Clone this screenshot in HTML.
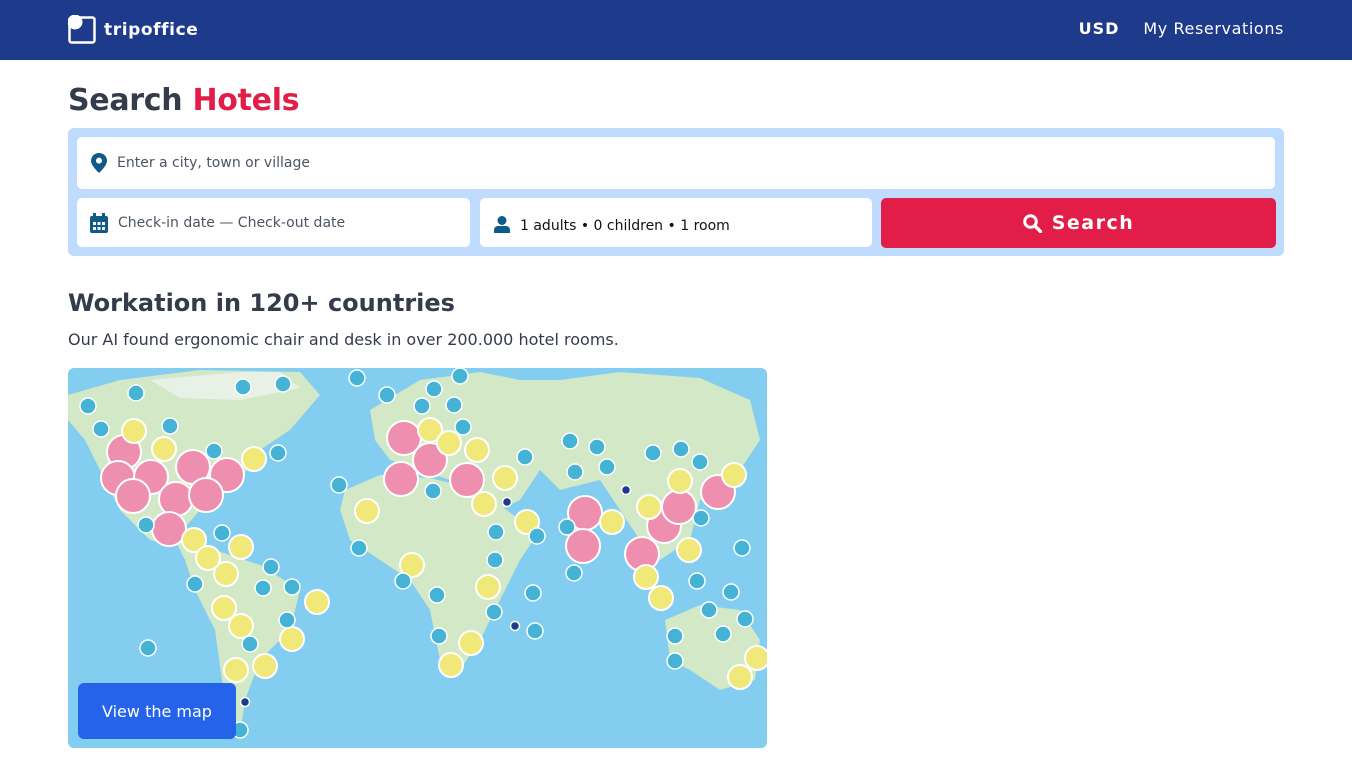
<!DOCTYPE html>
<html><head><meta charset="utf-8"><style>
*{box-sizing:border-box;margin:0;padding:0}
body{width:1352px;height:760px;overflow:hidden;background:#fff;font-family:"DejaVu Sans","Liberation Sans",sans-serif;color:#343b4a}
.nav{height:60px;background:#1e3a8a;position:relative;color:#fff}
.logo{position:absolute;left:68px;top:15px;display:flex;align-items:center}
.logo span{font-weight:bold;font-size:17px;letter-spacing:.6px;margin-left:7px}
.nr{position:absolute;right:68px;top:19px;font-size:16px;letter-spacing:.6px}
.nr b{margin-right:24px;letter-spacing:1px}
h1{position:absolute;left:68px;top:83px;font-size:30px;font-weight:bold;letter-spacing:-.3px}
h1 em{font-style:normal;color:#e11d48}
.box{position:absolute;left:68px;top:128px;width:1216px;height:128px;background:#bfdbfe;border-radius:6px}
.f{position:absolute;background:#fff;border-radius:5px;font-size:14px;color:#4b5563;display:flex;align-items:center}
.btn{position:absolute;left:813px;top:70px;width:395px;height:50px;background:#e11d48;border-radius:5px;color:#fff;font-weight:bold;font-size:19px;letter-spacing:1.5px;display:flex;align-items:center;justify-content:center}
h2{position:absolute;left:68px;top:289px;font-size:24px;font-weight:bold}
p{position:absolute;left:68px;top:330px;font-size:16px}
.map{position:absolute;left:68px;top:368px;width:699px;height:380px;border-radius:6px;overflow:hidden;background:#82cdf0}
.vb{position:absolute;left:10px;top:315px;width:158px;height:56px;background:#2563eb;border-radius:6px;color:#fff;font-size:16px;display:flex;align-items:center;justify-content:center}
</style></head><body>
<div class="nav">
<div class="logo"><svg width="29" height="29" viewBox="0 0 29 29"><rect x="1.5" y="2.5" width="25" height="25" rx="2" fill="none" stroke="#fff" stroke-width="2.5"/><circle cx="7" cy="7" r="7.5" fill="#fff"/></svg><span>tripoffice</span></div>
<div class="nr"><b>USD</b>My Reservations</div>
</div>
<h1>Search <em>Hotels</em></h1>
<div class="box">
<div class="f" style="left:9px;top:9px;width:1198px;height:52px"><svg style="margin:0 10px 0 14px" width="16" height="20" viewBox="0 0 16 20"><path d="M8 0C3.6 0 0 3.4 0 7.8 0 13 8 20 8 20s8-7 8-12.2C16 3.4 12.4 0 8 0z" fill="#0e5a8a"/><circle cx="8" cy="7.6" r="3" fill="#fff"/></svg>Enter a city, town or village</div>
<div class="f" style="left:9px;top:70px;width:393px;height:49px"><svg style="margin:0 10px 0 13px" width="18" height="20" viewBox="0 0 18 20"><rect x="0" y="3" width="18" height="17" rx="2" fill="#0e5a8a"/><rect x="3" y="0" width="3" height="5" fill="#0e5a8a"/><rect x="12" y="0" width="3" height="5" fill="#0e5a8a"/><g fill="#fff"><rect x="3" y="9" width="3" height="3"/><rect x="7.5" y="9" width="3" height="3"/><rect x="12" y="9" width="3" height="3"/><rect x="3" y="14" width="3" height="3"/><rect x="7.5" y="14" width="3" height="3"/><rect x="12" y="14" width="3" height="3"/></g></svg>Check-in date — Check-out date</div>
<div class="f" style="left:412px;top:70px;width:392px;height:49px;color:#111"><svg style="margin:4px 10px 0 14px" width="16" height="17" viewBox="0 0 16 17"><circle cx="8" cy="4.5" r="4.5" fill="#0e5a8a"/><path d="M0 17v-3c0-2.5 2-4 4-4h8c2 0 4 1.5 4 4v3z" fill="#0e5a8a"/></svg><span style="margin-top:6px">1 adults • 0 children • 1 room</span></div>
<div class="btn"><svg style="margin-right:10px" width="19" height="19" viewBox="0 0 19 19"><circle cx="7.5" cy="7.5" r="5.8" fill="none" stroke="#fff" stroke-width="3"/><path d="M12 12l5.5 5.5" stroke="#fff" stroke-width="3.4" stroke-linecap="round"/></svg>Search</div>
</div>
<h2>Workation in 120+ countries</h2>
<p>Our AI found ergonomic chair and desk in over 200.000 hotel rooms.</p>
<div class="map">
<svg width="699" height="380" viewBox="68 368 699 380">
<g fill="#d2e8c6">
<path d="M68 395L120 380 200 370 300 372 320 395 290 430 260 450 240 480 200 510 170 545 150 540 120 510 100 470 85 440 68 420z"/>
<path d="M175 540L215 550 260 565 300 590 290 630 260 660 245 700 240 735 228 730 222 680 215 630 195 590 185 560z"/>
<path d="M370 410L420 380 480 372 520 380 560 380 620 372 700 378 750 400 760 440 740 470 700 500 690 540 660 560 640 540 620 510 600 480 560 490 540 470 520 500 500 510 470 500 450 480 420 470 390 460 375 440z"/>
<path d="M345 490L380 475 430 478 480 490 520 520 540 530 520 560 500 600 480 640 460 670 440 660 430 610 410 580 380 560 350 540 340 510z"/>
<path d="M665 620L700 605 740 610 760 640 755 680 720 690 690 670 670 660z"/>
<path d="M150 380L240 372 280 372 300 388 240 400 180 398z" fill="#e8f1e6"/>
</g>
<g stroke="#fff" stroke-width="2" fill="#ef8fb0">
<circle cx="124" cy="452" r="17"/><circle cx="118" cy="478" r="17"/><circle cx="151" cy="477" r="17"/><circle cx="193" cy="467" r="17"/><circle cx="227" cy="475" r="17"/><circle cx="133" cy="496" r="17"/><circle cx="176" cy="499" r="17"/><circle cx="206" cy="495" r="17"/><circle cx="169" cy="529" r="17"/><circle cx="404" cy="438" r="17"/><circle cx="430" cy="460" r="17"/><circle cx="401" cy="479" r="17"/><circle cx="467" cy="480" r="17"/><circle cx="585" cy="513" r="17"/><circle cx="583" cy="546" r="17"/><circle cx="642" cy="554" r="17"/><circle cx="664" cy="526" r="17"/><circle cx="679" cy="507" r="17"/><circle cx="718" cy="492" r="17"/>
</g>
<g stroke="#fff" stroke-width="2" fill="#f0e878">
<circle cx="134" cy="431" r="12"/><circle cx="164" cy="449" r="12"/><circle cx="254" cy="459" r="12"/><circle cx="194" cy="540" r="12"/><circle cx="241" cy="547" r="12"/><circle cx="208" cy="558" r="12"/><circle cx="226" cy="574" r="12"/><circle cx="224" cy="608" r="12"/><circle cx="241" cy="626" r="12"/><circle cx="317" cy="602" r="12"/><circle cx="292" cy="639" r="12"/><circle cx="236" cy="670" r="12"/><circle cx="265" cy="666" r="12"/><circle cx="367" cy="511" r="12"/><circle cx="412" cy="565" r="12"/><circle cx="430" cy="430" r="12"/><circle cx="449" cy="443" r="12"/><circle cx="477" cy="450" r="12"/><circle cx="505" cy="478" r="12"/><circle cx="484" cy="504" r="12"/><circle cx="527" cy="522" r="12"/><circle cx="612" cy="522" r="12"/><circle cx="649" cy="507" r="12"/><circle cx="680" cy="481" r="12"/><circle cx="734" cy="475" r="12"/><circle cx="689" cy="550" r="12"/><circle cx="646" cy="577" r="12"/><circle cx="661" cy="598" r="12"/><circle cx="471" cy="643" r="12"/><circle cx="451" cy="665" r="12"/><circle cx="488" cy="587" r="12"/><circle cx="757" cy="658" r="12"/><circle cx="740" cy="677" r="12"/>
</g>
<g stroke="#fff" stroke-width="1.5" fill="#45b3d6">
<circle cx="88" cy="406" r="8"/><circle cx="101" cy="429" r="8"/><circle cx="136" cy="393" r="8"/><circle cx="170" cy="426" r="8"/><circle cx="214" cy="451" r="8"/><circle cx="278" cy="453" r="8"/><circle cx="146" cy="525" r="8"/><circle cx="222" cy="533" r="8"/><circle cx="271" cy="567" r="8"/><circle cx="263" cy="588" r="8"/><circle cx="292" cy="587" r="8"/><circle cx="195" cy="584" r="8"/><circle cx="250" cy="644" r="8"/><circle cx="287" cy="620" r="8"/><circle cx="148" cy="648" r="8"/><circle cx="243" cy="387" r="8"/><circle cx="283" cy="384" r="8"/><circle cx="357" cy="378" r="8"/><circle cx="387" cy="395" r="8"/><circle cx="434" cy="389" r="8"/><circle cx="422" cy="406" r="8"/><circle cx="460" cy="376" r="8"/><circle cx="454" cy="405" r="8"/><circle cx="463" cy="427" r="8"/><circle cx="339" cy="485" r="8"/><circle cx="359" cy="548" r="8"/><circle cx="403" cy="581" r="8"/><circle cx="437" cy="595" r="8"/><circle cx="439" cy="636" r="8"/><circle cx="533" cy="593" r="8"/><circle cx="535" cy="631" r="8"/><circle cx="494" cy="612" r="8"/><circle cx="495" cy="560" r="8"/><circle cx="496" cy="532" r="8"/><circle cx="537" cy="536" r="8"/><circle cx="433" cy="491" r="8"/><circle cx="525" cy="457" r="8"/><circle cx="570" cy="441" r="8"/><circle cx="597" cy="447" r="8"/><circle cx="575" cy="472" r="8"/><circle cx="607" cy="467" r="8"/><circle cx="653" cy="453" r="8"/><circle cx="681" cy="449" r="8"/><circle cx="700" cy="462" r="8"/><circle cx="701" cy="518" r="8"/><circle cx="567" cy="527" r="8"/><circle cx="574" cy="573" r="8"/><circle cx="697" cy="581" r="8"/><circle cx="709" cy="610" r="8"/><circle cx="731" cy="592" r="8"/><circle cx="742" cy="548" r="8"/><circle cx="675" cy="636" r="8"/><circle cx="723" cy="634" r="8"/><circle cx="745" cy="619" r="8"/><circle cx="675" cy="661" r="8"/><circle cx="240" cy="730" r="8"/>
</g>
<g fill="#1e3a8a" stroke="#fff" stroke-width="1.5"><circle cx="507" cy="502" r="4.5"/><circle cx="626" cy="490" r="4.5"/><circle cx="515" cy="626" r="4.5"/><circle cx="245" cy="702" r="4.5"/></g>
</svg>
<div class="vb">View the map</div>
</div>
</body></html>
